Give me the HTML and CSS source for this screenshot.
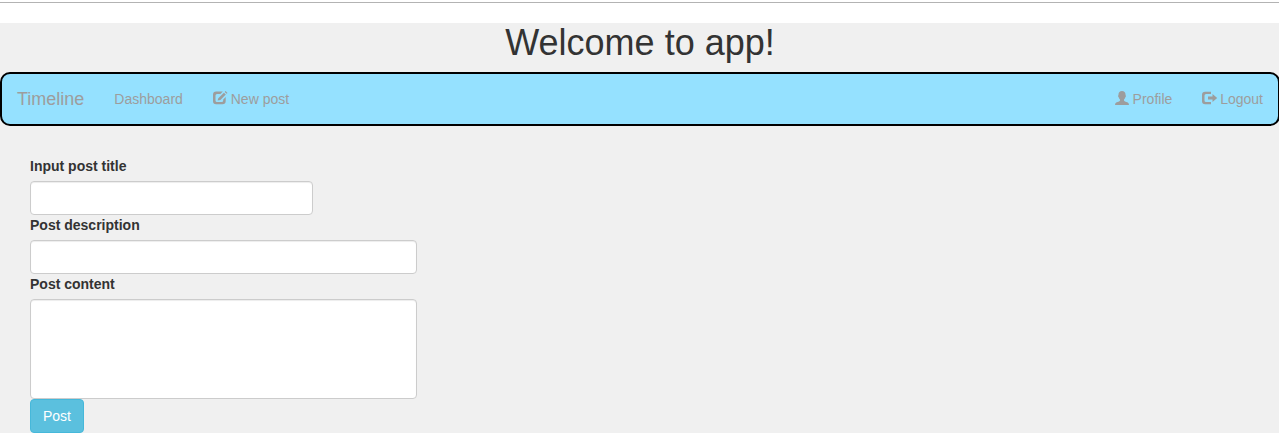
FILE: index.html
```
<!DOCTYPE html>
<html lang="en">
<head>
<meta charset="utf-8">
<title>New post</title>
<link rel="stylesheet" href="styles.css">
</head>
<body>
<hr class="divider">
<main class="page">
  <h1 class="title">Welcome to app!</h1>
  <nav class="navbar">
    <a class="brand">Timeline</a>
    <a class="nav-link">Dashboard</a>
    <a class="nav-link"><svg class="icon" viewBox="0 0 14 14"><path fill-rule="evenodd" d="M3.2 .5H9.8L7.4 2.9H4Q2.5 2.9 2.5 4.4V9.4Q2.5 10.9 4 10.9H8.6Q10.2 10.9 10.2 9.4V8.4L12.7 5.9V10Q12.7 13.3 9.4 13.3H3.2Q0 13.3 0 10V3.8Q0 .5 3.2 .5ZM10.9 1.7L12.8 3.6L7.4 9L4.6 9.6L5.3 7.3ZM11.7 .9L12.6 0L14.5 1.9L13.6 2.8Z"/></svg> New post</a>
    <a class="nav-link nav-link-end"><svg class="icon" viewBox="0 0 14 14"><path d="M7 0C9.2 0 10.5 1.3 10.5 3.3V4.2Q11.1 4.4 10.9 5.3Q10.7 6.3 10.2 6.5Q9.8 7.8 9 8.5V9.6Q9.2 10.1 10 10.4L12.8 11.4Q14 11.9 14 14H0Q0 11.9 1.2 11.4L4 10.4Q4.8 10.1 5 9.6V8.5Q4.2 7.8 3.8 6.5Q3.3 6.3 3.1 5.3Q2.9 4.4 3.5 4.2V3.3C3.5 1.3 4.8 0 7 0Z"/></svg> Profile</a>
    <a class="nav-link"><svg class="icon" viewBox="0 0 14 14"><path d="M3.2 .8H9V3.1H4Q2.5 3.1 2.5 4.6V9.4Q2.5 10.9 4 10.9H9V13.2H3.2Q0 13.2 0 10V4Q0 .8 3.2 .8ZM10.5 3L15.2 7L10.5 11V8.5H6V5.5H10.5Z"/></svg> Logout</a>
  </nav>
  <form class="post-form">
    <label class="label" for="post-title">Input post title</label>
    <input class="control control-short" id="post-title" type="text">
    <label class="label" for="post-description">Post description</label>
    <input class="control" id="post-description" type="text">
    <label class="label" for="post-content">Post content</label>
    <textarea class="control control-area" id="post-content"></textarea>
    <button class="button" type="button">Post</button>
  </form>
</main>
</body>
</html>
```
FILE: styles.css
```
* {
  box-sizing: border-box;
}
body {
  margin: 0;
  padding-top: 2px;
  overflow: hidden;
  background: #fff;
  color: #333;
  font: 14px/20px "Liberation Sans", Arial, sans-serif;
}
.divider {
  margin: 0 0 20px;
  border: 0;
  border-top: 1px solid #b3b3b3;
}
.page {
  width: 1280px;
  background: #f0f0f0;
}
.title {
  margin: 0 0 10px;
  font-size: 36px;
  font-weight: 500;
  line-height: 39px;
  text-align: center;
}
.navbar {
  display: flex;
  height: 54px;
  margin-bottom: 20px;
  border: 2px solid #000;
  border-radius: 10px;
  background: #95e1ff;
  color: #9d9d9d;
}
.brand {
  padding: 15px;
  font-size: 18px;
}
.nav-link {
  padding: 15px;
}
.nav-link-end {
  margin-left: auto;
}
.icon {
  display: inline-block;
  width: 14px;
  height: 14px;
  vertical-align: -1px;
  fill: currentColor;
  overflow: visible;
}
.post-form {
  display: flex;
  flex-direction: column;
  align-items: flex-start;
  padding: 10px 30px 0;
}
.label {
  margin-bottom: 5px;
  font-weight: 700;
}
.control {
  display: block;
  width: 387px;
  height: 34px;
  margin: 0;
  padding: 6px 12px;
  border: 1px solid #ccc;
  border-radius: 4px;
  background: #fff;
  box-shadow: inset 0 1px 1px rgba(0, 0, 0, .075);
  font: inherit;
}
.control-short {
  width: 283px;
}
.control-area {
  height: 100px;
  resize: none;
}
.button {
  height: 34px;
  padding: 6px 12px;
  border: 1px solid #46b8da;
  border-radius: 4px;
  background: #5bc0de;
  color: #fff;
  font: inherit;
}
```
